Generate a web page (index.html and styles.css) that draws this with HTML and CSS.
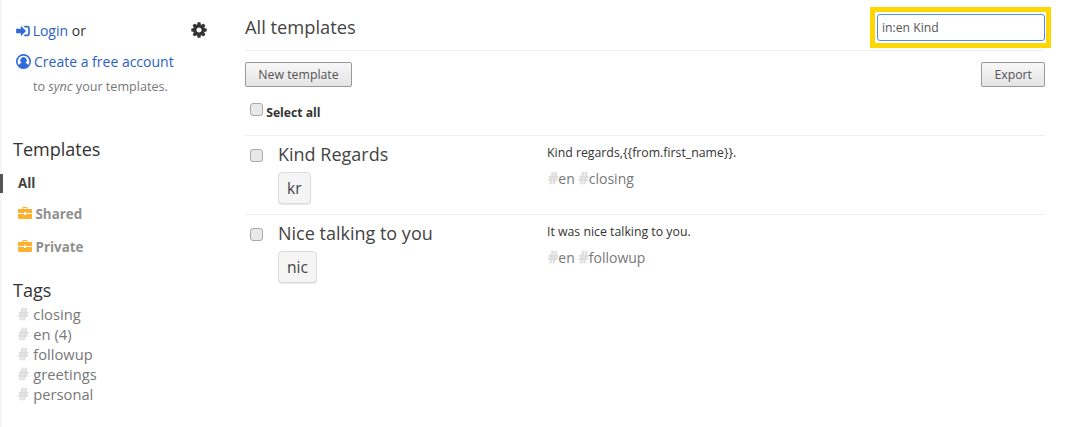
FILE: index.html
```html
<!DOCTYPE html>
<html lang="en">
<head>
    <meta charset="UTF-8">
    <title>All templates</title>
    <link rel="stylesheet" href="styles.css">
</head>
<body>
<div class="app">
    <!-- Left column: account, folders and tags -->
    <div class="sidebar">
        <div class="account">
            <div class="login-line">
                <span>
                    <svg class="icon-login" viewBox="0 0 16 14"><path fill="#2f6bd8" d="M0 4.500h5.500V1L11.500 7l-6 6V9.500H0zM9.500 1H13q3 0 3 3v6q0 3-3 3H9.500v-2H13q1 0 1-1V4q0-1-1-1H9.500z"/></svg>
                    <a href="#" class="link">Login</a> or
                </span>
                <svg class="icon-cog" viewBox="0 0 1792 1792"><path fill="#333" d="M1152 896q0-106-75-181t-181-75-181 75-75 181 75 181 181 75 181-75 75-181zm512-109v222q0 12-8 23t-20 13l-185 28q-19 54-39 91 35 50 107 138 10 12 10 25t-9 23q-27 37-99 108t-94 71q-12 0-26-9l-138-108q-44 23-91 38-16 136-29 186-7 28-36 28h-222q-14 0-24.500-8.500t-11.500-21.500l-28-184q-49-16-90-37l-141 107q-10 9-25 9-14 0-25-11-126-114-165-168-7-10-7-23 0-12 8-23 15-21 51-66.500t54-70.500q-27-50-41-99l-183-27q-13-2-21-12.500t-8-23.500v-222q0-12 8-23t19-13l186-28q14-46 39-92-40-57-107-138-10-12-10-24 0-10 9-23 26-36 98.500-107.500t94.500-71.500q13 0 26 10l138 107q44-23 91-38 16-136 29-186 7-28 36-28h222q14 0 24.500 8.500t11.500 21.500l28 184q49 16 90 37l142-107q9-9 24-9 13 0 25 10 129 119 165 170 7 8 7 22 0 12-8 23-15 21-51 66.500t-54 70.500q26 50 41 98l183 28q13 2 21 12.500t8 23.500z"/></svg>
            </div>
            <div class="signup-line">
                <svg class="icon-user" viewBox="0 0 16 16"><path fill="#2f6bd8" fill-rule="evenodd" d="M8 0a8 8 0 1 1 0 16A8 8 0 0 1 8 0zm0 1.800a6.200 6.200 0 0 0-4.900 10q1.100-2.100 2.900-2.400a3.300 3.300 0 1 1 4 0q1.800.3 2.900 2.400A6.200 6.200 0 0 0 8 1.800z"/></svg>
                <a href="#" class="link">Create a free account</a>
            </div>
            <div class="sync-note">to <em>sync</em> your templates.</div>
        </div>

        <h3 class="side-title">Templates</h3>
        <ul class="folders">
            <li class="folder active">All</li>
            <li class="folder">
                <svg class="icon-case" viewBox="0 0 14 12"><path fill="#fdb12c" d="M4.500 2V.9q0-.9.900-.9h3.200q.9 0 .9.900V2H14v4H8v-.8H6V6H0V2zm1-1v1h3V1zM0 7h6v1h2V7h6v3.800q0 1.200-1.200 1.200H1.200Q0 12 0 10.800z"/></svg>
                Shared
            </li>
            <li class="folder">
                <svg class="icon-case" viewBox="0 0 14 12"><path fill="#fdb12c" d="M4.500 2V.9q0-.9.900-.9h3.200q.9 0 .9.900V2H14v4H8v-.8H6V6H0V2zm1-1v1h3V1zM0 7h6v1h2V7h6v3.800q0 1.200-1.200 1.200H1.200Q0 12 0 10.800z"/></svg>
                Private
            </li>
        </ul>

        <h3 class="side-title tags-title">Tags</h3>
        <ul class="tags">
            <li><span class="hash">#</span>closing</li>
            <li><span class="hash">#</span>en (4)</li>
            <li><span class="hash">#</span>followup</li>
            <li><span class="hash">#</span>greetings</li>
            <li><span class="hash">#</span>personal</li>
        </ul>
    </div>

    <!-- Main column: template list -->
    <div class="main">
        <div class="header">
            <h2>All templates</h2>
            <div class="search-box">
                <input type="text" class="search-input" value="in:en Kind">
            </div>
        </div>

        <div class="toolbar">
            <button class="btn btn-new">New template</button>
            <button class="btn">Export</button>
        </div>

        <label class="select-all"><input type="checkbox" class="check"> Select all</label>

        <div class="row">
            <input type="checkbox" class="check row-check">
            <div class="row-left">
                <div class="row-title">Kind Regards</div>
                <span class="shortcut">kr</span>
            </div>
            <div class="row-right">
                <div class="row-text">Kind regards,{{from.first_name}}.</div>
                <div class="row-tags"><span class="hash">#</span>en <span class="hash">#</span>closing</div>
            </div>
        </div>

        <div class="row">
            <input type="checkbox" class="check row-check">
            <div class="row-left">
                <div class="row-title">Nice talking to you</div>
                <span class="shortcut">nic</span>
            </div>
            <div class="row-right">
                <div class="row-text">It was nice talking to you.</div>
                <div class="row-tags"><span class="hash">#</span>en <span class="hash">#</span>followup</div>
            </div>
        </div>
    </div>
</div>
</body>
</html>
```

FILE: styles.css
```css
* {
    box-sizing: border-box;
}

body {
    margin: 0;
    font-family: "Open Sans", Arial, sans-serif;
    font-size: 14px;
    color: #333;
    background-color: #fff;
}

ul {
    list-style: none;
    margin: 0;
    padding: 0;
}

.app {
    display: flex;
    height: 427px;
    overflow: hidden;
}

.sidebar {
    width: 245px;
    flex: none;
    border-left: 2px solid #f5f5f5;
    padding: 19px 0 0 0;
}

.account {
    padding-left: 14px;
    font-size: 14px;
}

.login-line {
    display: flex;
    justify-content: space-between;
    align-items: center;
    height: 22px;
    width: 192px;
}

.link {
    color: #2a5fc4;
    text-decoration: none;
}

.icon-login {
    width: 14px;
    height: 12px;
    margin-right: -1px;
    vertical-align: -1px;
}

.icon-cog {
    width: 18px;
    height: 18px;
}

.signup-line {
    margin-top: 9px;
    height: 22px;
    display: flex;
    align-items: center;
    gap: 3px;
}

.icon-user {
    width: 15px;
    height: 15px;
}

.sync-note {
    margin: 6px 0 0 17px;
    font-size: 12.600px;
    color: #777;
}

.side-title {
    margin: 41px 0 0 11px;
    font-size: 18px;
    font-weight: 400;
    line-height: 26px;
}

.tags-title {
    margin-top: 20px;
}

.folders {
    margin-top: 12px;
}

.folder {
    height: 19px;
    line-height: 19px;
    margin-bottom: 14px;
    padding-left: 16px;
    font-size: 13.400px;
    font-weight: 700;
    color: #8f8f8f;
}

.folder.active {
    margin-left: -2px;
    margin-bottom: 12px;
    padding-left: 15px;
    border-left: 3px solid #555;
    color: #444;
}

.icon-case {
    width: 14px;
    height: 12px;
}

.tags {
    padding-left: 16px;
    margin-top: 1px;
    font-size: 14.700px;
    color: #777;
}

.tags li {
    height: 20px;
    line-height: 20px;
}

.tags .hash {
    margin-right: 5px;
}

.hash {
    font-size: 16px;
    font-weight: 700;
    line-height: 1;
    color: #ddd;
    -webkit-text-stroke: 0.4px #ddd;
}

.main {
    flex: none;
    width: 800px;
}

.header {
    height: 51px;
    display: flex;
    justify-content: space-between;
    align-items: center;
    border-bottom: 1px solid #eee;
}

.header h2 {
    margin: 3px 0 0 0;
    font-size: 18.300px;
    font-weight: 400;
    color: #444;
}

.search-box {
    margin: 5px -6px 0 0;
    border: 5px solid #ffd700;
    padding: 2px 1px 2px 2px;
    background: #fff;
}

.search-input {
    display: block;
    width: 168px;
    height: 27px;
    padding: 0 4px;
    border: 1px solid #4d8fe0;
    border-radius: 3px;
    font-family: inherit;
    font-size: 12.200px;
    color: #555;
    outline: none;
}

.toolbar {
    display: flex;
    justify-content: space-between;
    margin-top: 11px;
}

.btn {
    height: 25px;
    padding: 0 12px;
    border: 1px solid #999;
    border-radius: 2px;
    background: linear-gradient(#f8f8f8, #e4e4e4);
    font-family: inherit;
    font-size: 12.300px;
    color: #555;
}

.btn-new {
    width: 107px;
}

.select-all {
    display: block;
    margin: 16px 0 0 5px;
    height: 32px;
    font-size: 12.200px;
    font-weight: 700;
}

.check {
    appearance: none;
    width: 13px;
    height: 13px;
    margin: 0;
    border: 1px solid #aaa;
    border-radius: 3px;
    background: #e8e8e8;
    vertical-align: 1px;
}

.row {
    display: flex;
    height: 79px;
    border-top: 1px solid #eee;
}

.row-check {
    margin: 13px 0 0 5px;
    flex: none;
}

.row-left {
    width: 269px;
    margin-left: 15px;
    flex: none;
}

.row-title {
    margin-top: 5px;
    font-size: 18px;
    line-height: 26px;
    color: #444;
}

.shortcut {
    display: inline-block;
    margin-top: 5px;
    height: 32px;
    line-height: 30px;
    padding: 0 8px;
    border: 1px solid #ddd;
    border-radius: 4px;
    background: #f5f5f5;
    box-shadow: 0 1px 1px rgba(0, 0, 0, 0.1);
    font-size: 15.600px;
    color: #444;
}

.row-text {
    margin-top: 8px;
    font-size: 12.300px;
    line-height: 18px;
}

.row-tags {
    margin-top: 7px;
    padding-left: 1px;
    font-size: 14px;
    color: #777;
}
```
